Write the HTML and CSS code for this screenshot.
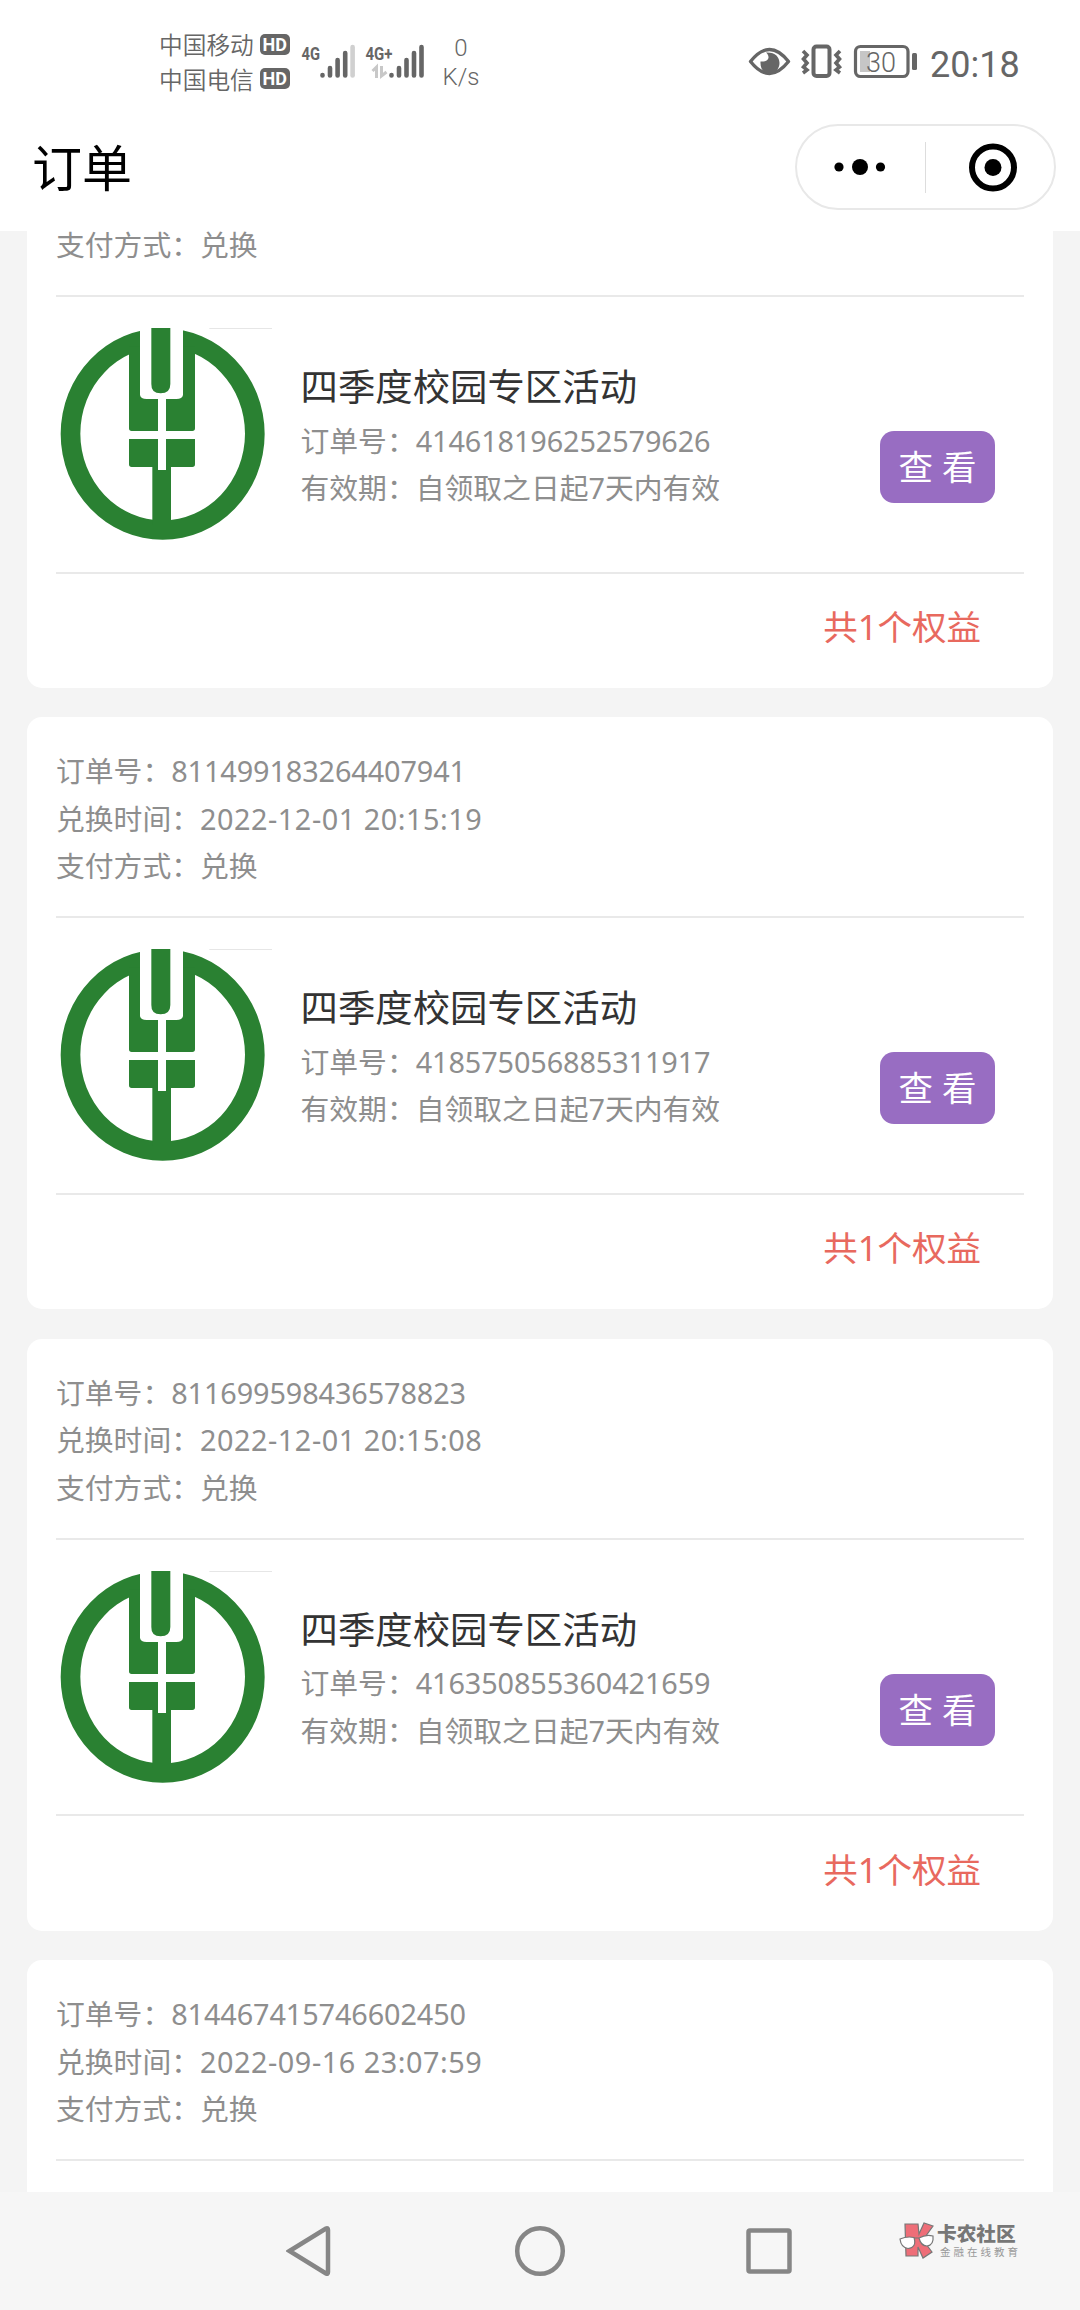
FILE: index.html
```html
<!DOCTYPE html>
<html lang="zh-CN">
<head>
<meta charset="utf-8">
<title>订单</title>
<link rel="stylesheet" href="styles.css">
</head>
<body>
<svg class="defs" width="0" height="0" aria-hidden="true">
  <symbol id="bank" viewBox="48 54 648 648">
    <path fill="#2a8132" fill-rule="evenodd" d="M62 372a306 317 0 1 0 612 0a306 317 0 1 0-612 0zM121 371a247 260 0 1 0 494 0a247 260 0 1 0-494 0z"/>
    <path fill="#2a8132" d="M267 110H465V355q0 8-8 8H275q-8 0-8-8zM267 387H465V463q0 8-8 8H393V645H337V471H275q-8 0-8-8z"/>
    <path fill="#fff" d="M300 40H429V255q-2 12-20 12H378V363H465V387H378V480H354V387H267V363H354V267H320q-18 0-20-12z"/>
    <path fill="#2a8132" d="M334 54H391V222q0 28-29 28t-28-28z"/>
    <path stroke="#e6e6e6" stroke-width="3" d="M508 55.5H696"/>
  </symbol>
</svg>
<div class="screen">
  <header class="status">
    <div class="carriers">
      <div class="carrier">中国移动<b class="hd">HD</b></div>
      <div class="carrier">中国电信<b class="hd">HD</b></div>
    </div>
    <svg class="signals" width="126" height="40" viewBox="300 42 126 40">
      <g class="net"><text x="301.5" y="59.5" textLength="18.5" lengthAdjust="spacingAndGlyphs">4G</text><text x="365.5" y="59.5" textLength="27" lengthAdjust="spacingAndGlyphs">4G+</text></g>
      <g stroke="#666" stroke-width="4.6" stroke-linecap="round"><path d="M322.5 75v.5M330 68v7.5M337.600 60v15.500M345.200 53v22.500M391.500 75v.5M399 68v7.500M406.500 60v15.500M414 53v22.500M421.500 47v28.500"/><path stroke="#d0d0d0" d="M352.600 47v28.500"/></g>
      <path fill="none" stroke="#c8c8c8" stroke-width="3" d="M372.500 71l4-4v11M381.500 66v10l5-4"/>
    </svg>
    <div class="speed"><span>0</span><span>K/s</span></div>
    <svg class="indicators" width="170" height="40" viewBox="748 42 170 40">
      <path d="M750.500 61.500Q769.500 37.500 788.500 61.500Q769.500 85.500 750.500 61.500z" fill="none" stroke="#666" stroke-width="3.400" stroke-linejoin="round"/>
      <path d="M766 52.500C770 56 770 62 760.500 61.500C760 70 765 73.500 769.500 73.500C776 73.500 779.500 68 779.500 63C779.500 57 775 52 766 52.500z" fill="#666"/>
      <rect x="813.500" y="46.500" width="16" height="29.500" rx="3" fill="none" stroke="#666" stroke-width="4"/>
      <path d="M803 51l4 4-3.500 4 3.500 4-3.500 4 3.500 3-4 3M840 51l-4 4 3.500 4-3.500 4 3.500 4-3.500 3 4 3" fill="none" stroke="#666" stroke-width="3.600"/>
      <rect x="860" y="51" width="10" height="21" fill="#c6c6c6"/>
      <rect x="855.500" y="46.500" width="52.500" height="30" rx="5" fill="none" stroke="#666" stroke-width="3.200"/>
      <rect x="912" y="53" width="5" height="17" rx="1.500" fill="#666"/>
      <text class="battery" x="881" y="71.500" text-anchor="middle">30</text>
    </svg>
    <time class="clock">20:18</time>
  </header>
  <nav class="navbar">
    <h1>订单</h1>
    <div class="capsule">
      <svg width="128" height="82" viewBox="0 0 128 82"><circle cx="42" cy="41" r="4.600"/><circle cx="63" cy="41" r="8"/><circle cx="83.500" cy="41" r="4.600"/></svg>
      <i class="sep"></i>
      <svg width="128" height="82" viewBox="0 0 128 82"><circle cx="67" cy="41.500" r="21" fill="none" stroke="#000" stroke-width="6"/><circle cx="67" cy="41.500" r="8.500"/></svg>
    </div>
  </nav>
  <main class="orders">
    <article class="card scrolled">
      <div class="meta">
        <p>支付方式：兑换</p>
      </div>
      <div class="item">
        <svg class="logo"><use href="#bank"/></svg>
        <div class="info"><h2>四季度校园专区活动</h2><p>订单号：<span>414618196252579626</span></p><p>有效期：自领取之日起7天内有效</p></div>
        <button class="view">查 看</button>
      </div>
      <p class="total">共1个权益</p>
    </article>
    <article class="card">
      <div class="meta">
        <p>订单号：<span>811499183264407941</span></p>
        <p>兑换时间：<span class="date">2022-12-01 20:15:19</span></p>
        <p>支付方式：兑换</p>
      </div>
      <div class="item">
        <svg class="logo"><use href="#bank"/></svg>
        <div class="info"><h2>四季度校园专区活动</h2><p>订单号：<span>418575056885311917</span></p><p>有效期：自领取之日起7天内有效</p></div>
        <button class="view">查 看</button>
      </div>
      <p class="total">共1个权益</p>
    </article>
    <article class="card">
      <div class="meta">
        <p>订单号：<span>811699598436578823</span></p>
        <p>兑换时间：<span class="date">2022-12-01 20:15:08</span></p>
        <p>支付方式：兑换</p>
      </div>
      <div class="item">
        <svg class="logo"><use href="#bank"/></svg>
        <div class="info"><h2>四季度校园专区活动</h2><p>订单号：<span>416350855360421659</span></p><p>有效期：自领取之日起7天内有效</p></div>
        <button class="view">查 看</button>
      </div>
      <p class="total">共1个权益</p>
    </article>
    <article class="card">
      <div class="meta">
        <p>订单号：<span>814467415746602450</span></p>
        <p>兑换时间：<span class="date">2022-09-16 23:07:59</span></p>
        <p>支付方式：兑换</p>
      </div>
      <div class="item"></div>
    </article>
  </main>
  <footer class="keys">
    <svg width="46" height="54" viewBox="286 2224 46 54"><path d="M289.500 2251L326 2228.500Q328 2227.500 328 2230V2272Q328 2274.500 326 2273.500z"/></svg>
    <svg width="54" height="54" viewBox="513 2224 54 54"><circle cx="540" cy="2251" r="22.800"/></svg>
    <svg width="48" height="54" viewBox="745 2224 48 54"><rect x="748.500" y="2230.500" width="41" height="41" rx="1.500"/></svg>
    <div class="brand">
      <svg width="36" height="38" viewBox="899 2222 36 38">
        <path fill="#ee6e78" stroke="#777" stroke-width="1.200" d="M905 2224H918L919 2234L924 2223L933 2226L923 2240L932 2252L923 2258L918 2247V2256H906z"/>
        <path fill="#fff" stroke="#777" stroke-width="1.200" d="M900 2239q7-3 14-1.500q3 10-6 11q-7-1-8-9.500zM919 2238q7-4 14-2q1 9-6 10q-6 0-8-8zM914 2238l5 0"/>
      </svg>
      <div class="words"><strong>卡农社区</strong><small>金融在线教育</small></div>
    </div>
  </footer>
</div>
</body>
</html>
```

FILE: styles.css
```css
* { box-sizing: border-box; margin: 0; padding: 0; }
body { width: 1080px; font-family: "Noto Sans", "Noto Sans CJK SC", sans-serif; background: #f4f4f4; }
svg { display: block; flex: none; }
.defs { position: absolute; }
.screen { display: flex; flex-direction: column; width: 1080px; height: 2310px; overflow: hidden; }

.status { display: flex; align-items: flex-start; height: 110px; padding-left: 159px; background: #fff; color: #666; font-family: Roboto, "Noto Sans CJK SC", sans-serif; }
.carriers { width: 141px; padding-top: 27px; }
.carrier { display: flex; align-items: center; height: 34.500px; font-size: 23.700px; font-weight: 350; white-space: nowrap; }
.hd { width: 30px; height: 21px; margin-left: 6px; border-radius: 5px; background: #666; color: #fff; font-size: 18px; line-height: 21px; text-align: center; }
.signals { margin-top: 42px; }
.net { font: 700 19px Roboto, sans-serif; fill: #666; }
.speed { display: flex; flex-direction: column; align-items: center; width: 70px; padding-top: 34px; font-size: 24px; line-height: 28.500px; font-weight: 350; }
.indicators { margin: 42px 0 0 252px; }
.battery { font: 300 27px Roboto, sans-serif; fill: #666; }
.clock { margin: 44px 0 0 12px; font-size: 36px; line-height: 42px; font-weight: 400; }

.navbar { display: flex; flex: none; justify-content: space-between; height: 121px; padding: 14px 24px 0 32px; background: #fff; }
h1 { font-size: 50px; line-height: 88px; font-weight: 400; color: #000; }
.capsule { display: flex; align-items: center; width: 261px; height: 86px; border: 2px solid #e8e8e8; border-radius: 43px; }
.sep { width: 1px; height: 51px; background: #ddd; }

.orders { display: flex; flex: 1; flex-direction: column; gap: 29.500px; min-height: 0; padding: 0 27px; overflow: hidden; }
.card { flex: none; height: 592px; padding: 30px 29px 0; border-radius: 15px; background: #fff; color: #8e8e8e; font-size: 28.800px; }
.meta { height: 169px; }
.card p { line-height: 47.500px; white-space: nowrap; }
.card p span { letter-spacing: -0.100px; }
.card p .date { letter-spacing: 0.540px; }
.item { display: flex; height: 278.500px; padding: 31px 0 0; border-top: 2.500px solid #e9e9e9; border-bottom: 2.500px solid #e9e9e9; }
.logo { width: 216px; height: 216px; }
.info { flex: 1; padding: 30px 0 0 28.500px; }
h2 { height: 58.500px; font-size: 37.400px; line-height: 57px; font-weight: 400; color: #333; white-space: nowrap; }
.view { width: 115px; height: 72px; margin: 103px 29px 0 0; border: 0; border-radius: 14px; background: #986dc2; color: #fff; font: 400 34.500px/72px "Noto Sans", "Noto Sans CJK SC", sans-serif; white-space: nowrap; }
.card .total { padding: 28.500px 43px 0 0; font-size: 34.500px; line-height: 50px; text-align: right; color: #e8695e; }

.scrolled { height: 456.500px; padding-top: 0; border-radius: 0 0 15px 15px; }
.scrolled .meta { height: 64px; }
.scrolled .meta p { line-height: 27px; }

.keys { display: flex; flex: none; height: 118px; padding: 32px 0 0 286px; background: #f6f6f6; fill: none; stroke: #868686; stroke-width: 4.500px; }
.keys > svg + svg { margin-left: 181px; }
.keys > svg + svg + svg { margin-left: 178px; }
.brand { display: flex; gap: 2px; margin: -2px 0 0 106px; color: #777; }
.words { display: flex; flex-direction: column; }
.words strong { font: 900 19.700px/22px "Noto Sans CJK SC", sans-serif; white-space: nowrap; }
.words small { padding-left: 3px; font: 400 10.500px/16px "Noto Sans CJK SC", sans-serif; letter-spacing: 3px; color: #999; white-space: nowrap; }
```
